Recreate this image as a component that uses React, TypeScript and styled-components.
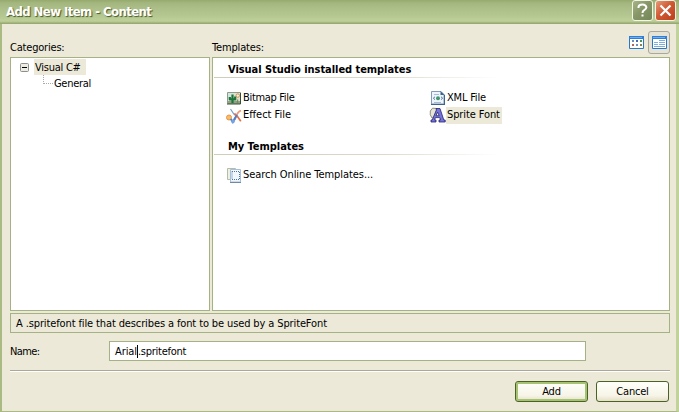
import React from "react";
import styled, { createGlobalStyle } from "styled-components";

const GlobalStyle = createGlobalStyle`
  * { box-sizing: border-box; }
  body { margin: 0; overflow: hidden; }
  button, input { font: inherit; color: inherit; }
`;

const Dialog = styled.div`
  width: 679px;
  height: 412px;
  display: flex;
  flex-direction: column;
  background: #ece9d8;
  border: solid #a9bb82;
  border-width: 0 3px 1px 2px;
  border-right-color: #c2d29c;
  font: 11px/14px "DejaVu Sans Condensed", "DejaVu Sans", sans-serif;
  color: #000;
`;

const TitleBar = styled.header`
  height: 24px;
  flex: none;
  margin: 0 -3px 0 -2px;
  padding: 0 3px 0 6px;
  display: flex;
  align-items: flex-start;
  background: linear-gradient(#95aa6e 0, #a2b67e 12%, #adbf89 35%, #b5c790 65%, #bfcf9a 88%, #9daf77 96%, #91a46c 100%);
`;

const Title = styled.h1`
  flex: 1;
  margin: 0;
  font: bold 13px/24px "DejaVu Sans Condensed", sans-serif;
  letter-spacing: -0.57px;
  color: #fff;
  text-shadow: 1px 1px 1px #46572a;
`;

const CaptionButton = styled.button<{ $close?: boolean }>`
  width: 21px;
  height: 21px;
  margin-left: 2px;
  padding: 0;
  display: grid;
  place-items: center;
  border: 1px solid #f4f5e4;
  border-radius: 3px;
  background: ${(p) =>
    p.$close
      ? "linear-gradient(135deg, #e79a7a, #d05a35 45%, #bd3f1c)"
      : "linear-gradient(135deg, #a6b587, #879767 45%, #74865a)"};
`;

const Body = styled.main`
  flex: 1;
  padding: 7px 6px 8px 8px;
  display: flex;
  flex-direction: column;
`;

const HeaderRow = styled.div`
  height: 26px;
  display: grid;
  grid-template-columns: 202px 1fr auto;
  align-items: end;
`;

const Label = styled.span<{ $track?: number }>`
  letter-spacing: ${(p) => p.$track ?? 0}px;
  white-space: nowrap;
`;

const HeaderLabel = styled(Label)`
  padding-bottom: 2px;
`;

const ViewButtons = styled.div`
  display: flex;
  align-self: start;
  gap: 1px;
`;

const ViewButton = styled.button<{ $active?: boolean }>`
  width: 22px;
  height: 23px;
  padding: 0 0 1px;
  display: grid;
  place-items: center;
  border: 1px solid ${(p) => (p.$active ? "#aaa89b" : "transparent")};
  border-radius: 3px;
  background: ${(p) => (p.$active ? "#e4e3d5" : "transparent")};
`;

const Panels = styled.div`
  display: grid;
  grid-template-columns: 200px 1fr;
  gap: 2px;
  height: 254px;
`;

const Panel = styled.section`
  background: #fff;
  border: 1px solid #a5b384;
`;

const TreeRoot = styled.div`
  display: flex;
  align-items: center;
  height: 16px;
  margin: 1px 0 0 9px;
  gap: 5px;
`;

const Chip = styled.span`
  height: 16px;
  padding: 2px 5px 0 1px;
  background: #ece9d8;
  letter-spacing: -0.25px;
`;

const TreeChild = styled.div`
  display: flex;
  height: 16px;
  margin-left: 32px;
  gap: 1px;
  line-height: 17px;
`;

const TreeLine = styled.i`
  width: 10px;
  height: 9px;
  border: dotted #aaa;
  border-width: 0 0 1px 1px;
`;

const GroupTitle = styled.h2`
  margin: 0 0 0 1px;
  padding: 5px 0 0 14px;
  height: 20px;
  width: 284px;
  font: bold 11px/14px "DejaVu Sans Condensed", sans-serif;
  letter-spacing: -0.05px;
  border-bottom: 1px solid;
  border-image: linear-gradient(90deg, #cfccb8, #dddacb 60%, #fff) 1;
`;

const Items = styled.div`
  display: grid;
  grid-template-columns: 204px 204px;
  grid-auto-rows: 17px;
  padding: 12px 0 0 13px;
  height: 57px;
`;

const Item = styled.div`
  display: flex;
  align-items: center;
  height: 17px;

  svg {
    flex: none;
    width: 16px;
  }
`;

const ItemLabel = styled(Label)<{ $selected?: boolean }>`
  height: 17px;
  line-height: 15px;
  padding: 0 2px 0 1px;
  background: ${(p) => (p.$selected ? "#ece9d8" : "transparent")};
`;

const Description = styled.div`
  height: 20px;
  margin-top: 2px;
  padding: 3px 5px;
  border: 1px solid #a5b384;
`;

const NameRow = styled.label`
  display: grid;
  grid-template-columns: 99px 477px;
  align-items: center;
  height: 20px;
  margin-top: 8px;
  line-height: 16px;
`;

const NameLabel = styled(Label)`
  padding-top: 2px;
`;

const NameField = styled.div`
  height: 20px;
  padding: 2px 5px;
  display: flex;
  border: 1px solid #a5b384;
  background: #fff;
`;

const Caret = styled.i`
  width: 1px;
  height: 13px;
  margin-top: 1px;
  background: #000;
`;

const Separator = styled.hr`
  width: 100%;
  height: 2px;
  margin: 9px 0 0;
  border: 0;
  border-top: 1px solid #aca899;
  border-bottom: 1px solid #fff;
`;

const Footer = styled.footer`
  display: flex;
  justify-content: flex-end;
  gap: 8px;
  margin-top: 9px;
  padding-right: 1px;
`;

const PushButton = styled.button<{ $default?: boolean }>`
  width: 73px;
  height: 21px;
  padding: 1px 0 0;
  letter-spacing: -0.2px;
  line-height: 18px;
  border: 1px solid #4a6324;
  border-radius: 3px;
  background: linear-gradient(#fffffa, #f7f5e8 70%, #e6dfc8);
  box-shadow: ${(p) => (p.$default ? "inset 0 0 0 2px #a5c373" : "none")};
`;

const HelpIcon = () => (
  <svg width="15" height="17" viewBox="0 0 15 17" fill="none" stroke="#fff" strokeWidth="2">
    <path d="M3.5 6V4.8Q4 2.5 7.4 2.5T11.4 5.3Q11.4 7 9.2 8.2Q7.5 9.2 7.5 11" />
    <path d="M7.5 12.5v2" />
  </svg>
);
const CloseIcon = () => (
  <svg width="15" height="15" viewBox="0 0 15 15" stroke="#fff" strokeWidth="2.2">
    <path d="M2.5 2.5l10 10M12.5 2.5l-10 10" />
  </svg>
);
const ViewFrame = () => (
  <>
    <path fill="#fff" stroke="#2a78c2" d="M.5.5h14v12H.5z" />
    <path fill="#2f7fd4" d="M0 0h15v3H0z" />
    <path fill="#6eaef0" d="M1 1h12v1H1z" />
  </>
);
const LargeIconsView = () => (
  <svg width="15" height="13" viewBox="0 0 15 13">
    <ViewFrame />
    <path fill="#6d8dbb" d="M3 4h2v2H3zM7 8h2v2H7z" />
    <path fill="#4c66ae" d="M7 4h2v2H7z" />
    <path fill="#4c9456" d="M11 4h2v2h-2z" />
    <path fill="#b2635c" d="M3 8h2v2H3z" />
    <path fill="#8a8350" d="M11 8h2v2h-2z" />
  </svg>
);
const ListView = () => (
  <svg width="15" height="13" viewBox="0 0 15 13">
    <ViewFrame />
    <path stroke="#7daee0" d="M7 4.5h6M2 6.5h4M7 6.5h6M2 8.5h4M7 8.5h6M2 10.5h11" />
  </svg>
);
const ExpandBox = () => (
  <svg width="9" height="9" viewBox="0 0 9 9">
    <rect x=".5" y=".5" width="8" height="8" rx="1" fill="#eeece2" stroke="#8c8f8a" />
    <path stroke="#000" d="M2 4.5h5" />
  </svg>
);
const BitmapIcon = () => (
  <svg width="16" height="16" viewBox="-1 1 16 16">
    <path fill="#d5e4dc" stroke="#8c9c8b" d="M.5 2.5h13v11H.5z" />
    <path fill="#ecdcb8" d="M8 3h5v6H8z" />
    <path fill="#9aa07c" d="M1 11h12v2H1z" />
    <path fill="none" stroke="#1b7439" strokeWidth="2.2" strokeLinejoin="round" d="M5.5 13V4.5M2.8 7v2.4h5.4V6.6" />
    <circle cx="10.8" cy="5.6" r="1.7" fill="#f9efd4" stroke="#b58555" strokeWidth=".8" />
    <path stroke="#6e8e65" strokeWidth="1.5" d="M10.5 13V9.5" />
    <path fill="none" stroke="#34503b" d="M0 14h13.5V3" />
  </svg>
);
const EffectIcon = () => (
  <svg width="16" height="16" viewBox="-1 0 16 16" fill="none" overflow="visible">
    <path stroke="#7d9fce" strokeWidth="1.2" d="M3.5 1l3 4.5 3 3" />
    <path stroke="#e56f45" strokeWidth="1.7" d="M7.5 5.5l3 3 3.3 4.8" />
    <path stroke="#ee9972" strokeWidth="1.8" d="M14 2.5q-3 1-4.5 5L7.8 12" />
    <circle cx="2" cy="9.5" r="2.5" fill="#f9bd68" stroke="#e79545" />
    <path stroke="#4e80ce" strokeWidth="2" d="M3.8 11l2 3 2.2-4 2-3" />
    <circle cx="6" cy="13.4" r="1.8" fill="#72a4e5" />
  </svg>
);
const XmlIcon = () => (
  <svg width="16" height="16" viewBox="0 1 16 16">
    <path fill="#edf4fb" stroke="#819bb8" d="M1.5 1.5h9.5l3 3v9.5H1.5z" />
    <path fill="#3e638d" d="M10.5 1l4 4h-4zM1 14h14v1H1zM14 5h1v10h-1z" />
    <path stroke="#5477a2" fill="none" d="M5 6.8L3.3 8.2 5 9.6M11 6.8l1.7 1.4L11 9.6" />
    <circle cx="8" cy="8.2" r="2" fill="#43976c" />
    <path stroke="#a5bdd6" d="M4 4.5h5M4 12.5h7" />
  </svg>
);
const SpriteFontIcon = () => (
  <svg width="16" height="16" viewBox="1 1 16 16" overflow="visible">
    <path fill="#e6e5d7" stroke="#8d8d82" d="M3 11Q.4 8 1.3 4L3.5 1.2l4.5.3L6 10z" />
    <path fill="#7773da" stroke="#24246c" strokeWidth=".8" d="M7 1.5h4L14.8 13h1.4v2H10v-2h1.5l-.7-2.4H6.4L5.6 13H7v2H2v-2h1.2L7.4 3zM8.6 5.2L7 8.7h3.2z" />
  </svg>
);
const SearchIcon = () => (
  <svg width="16" height="16" viewBox="-1 1 16 16">
    <path fill="#eef0e4" stroke="#b5bda9" d="M.5 1.5h8v11h-8z" />
    <path fill="#f1f7fd" stroke="#a9bfd8" d="M3.5 2.5h10v12.5h-10z" />
    <path fill="none" stroke="#4378a8" strokeDasharray="1 1" d="M5 4.5h7.5v8H5z" />
    <path stroke="#7189a5" d="M3 15.5h11" />
  </svg>
);

export default function App() {
  return (
    <>
      <GlobalStyle />
      <Dialog>
        <TitleBar>
          <Title>Add New Item - Content</Title>
          <CaptionButton aria-label="Help"><HelpIcon /></CaptionButton>
          <CaptionButton $close aria-label="Close"><CloseIcon /></CaptionButton>
        </TitleBar>
        <Body>
          <HeaderRow>
            <HeaderLabel $track={-0.2}>Categories:</HeaderLabel>
            <HeaderLabel $track={-0.15}>Templates:</HeaderLabel>
            <ViewButtons>
              <ViewButton aria-label="Large icons"><LargeIconsView /></ViewButton>
              <ViewButton $active aria-label="List"><ListView /></ViewButton>
            </ViewButtons>
          </HeaderRow>
          <Panels>
            <Panel>
              <TreeRoot><ExpandBox /><Chip>Visual C#</Chip></TreeRoot>
              <TreeChild><TreeLine /><Label $track={-0.3}>General</Label></TreeChild>
            </Panel>
            <Panel>
              <GroupTitle>Visual Studio installed templates</GroupTitle>
              <Items>
                <Item><BitmapIcon /><ItemLabel $track={-0.33}>Bitmap File</ItemLabel></Item>
                <Item><XmlIcon /><ItemLabel $track={-0.2}>XML File</ItemLabel></Item>
                <Item><EffectIcon /><ItemLabel>Effect File</ItemLabel></Item>
                <Item><SpriteFontIcon /><ItemLabel $selected $track={-0.1}>Sprite Font</ItemLabel></Item>
              </Items>
              <GroupTitle>My Templates</GroupTitle>
              <Items>
                <Item><SearchIcon /><ItemLabel $track={-0.06}>Search Online Templates...</ItemLabel></Item>
              </Items>
            </Panel>
          </Panels>
          <Description><Label $track={-0.12}>A .spritefont file that describes a font to be used by a SpriteFont</Label></Description>
          <NameRow>
            <NameLabel $track={-0.6}>Name:</NameLabel>
            <NameField><Label $track={-0.1}>Arial</Label><Caret /><Label $track={-0.25}>.spritefont</Label></NameField>
          </NameRow>
          <Separator />
          <Footer>
            <PushButton $default>Add</PushButton>
            <PushButton>Cancel</PushButton>
          </Footer>
        </Body>
      </Dialog>
    </>
  );
}
